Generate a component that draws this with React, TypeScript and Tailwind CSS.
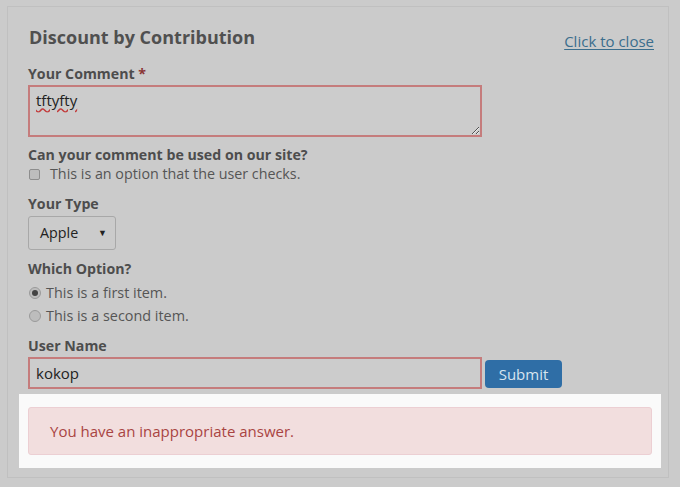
import { useState } from "react";

export default function App() {
    const [comment, setComment] = useState("tftyfty");
    const [name, setName] = useState("kokop");

    return (
        <div className="min-h-[487px] w-[680px] bg-[#cbcbcb] pt-[6px] pl-[7px] text-[14px] text-[#4d4d4d]" style={{ fontFamily: '"Open Sans", sans-serif' }}>
            <div className="w-[662px] h-[472px] border border-[#c0c0c0] bg-[#cbcbcb]">
                {/* Header */}
                <div className="flex justify-between items-start pl-[21px] pr-[14px] pt-[18px]">
                    <h2 className="text-[18px] font-bold leading-[24px] text-[#505050]">Discount by Contribution</h2>
                    <a href="#" className="mt-[6px] text-[15px] leading-[20px] text-[#3b6e8d] underline underline-offset-2">Click to close</a>
                </div>

                <form className="pl-[20px] pt-[13px]">
                    {/* Comment */}
                    <label className="block font-bold leading-[20px] text-[14.2px]">
                        Your Comment <span className="text-[#8a3535]">*</span>
                    </label>
                    <textarea
                        value={comment}
                        onChange={(e) => setComment(e.target.value)}
                        className="block w-[454px] h-[52px] mt-[1px] px-[6px] py-[2px] border-2 border-[#c57c7c] bg-[#cccccc] text-[15px] text-[#222] underline decoration-wavy decoration-[#c23b3b] outline-none resize"
                    />

                    {/* Checkbox */}
                    <div className="mt-[8px] font-bold leading-[20px] text-[14.2px]">Can your comment be used on our site?</div>
                    <label className="flex items-center gap-[10px] leading-[18px] text-[#555] text-[14.3px]">
                        <span className="ml-[1px] w-[11px] h-[11px] rounded-[2px] border border-[#8d8d8d] bg-[#bdbdbd]" />
                        This is an option that the user checks.
                    </label>

                    {/* Select */}
                    <div className="mt-[11px] font-bold leading-[20px] text-[14.2px]">Your Type</div>
                    <div className="mt-[2px] w-[88px] h-[34px] rounded-[3px] border border-[#a8a8a8] flex items-center justify-between pl-[11px] pr-[8px] text-[#222] text-[14.3px]">
                        <span>Apple</span>
                        <span className="text-[9px]">▼</span>
                    </div>

                    {/* Radios */}
                    <div className="mt-[9px] font-bold leading-[20px] text-[14.2px]">Which Option?</div>
                    <label className="flex items-center gap-[5px] mt-[4px] leading-[20px] text-[#555] text-[14.4px]">
                        <span className="ml-[1px] w-[12px] h-[12px] rounded-full border border-[#9a9a9a] bg-[#bdbdbd] flex items-center justify-center">
                            <span className="w-[6px] h-[6px] rounded-full bg-[#444]" />
                        </span>
                        This is a first item.
                    </label>
                    <label className="flex items-center gap-[5px] mt-[3px] leading-[20px] text-[#555] text-[14.4px]">
                        <span className="ml-[1px] w-[12px] h-[12px] rounded-full border border-[#9a9a9a] bg-[#bdbdbd]" />
                        This is a second item.
                    </label>

                    {/* Name */}
                    <div className="mt-[10px] font-bold leading-[20px] text-[14.2px]">User Name</div>
                    <div className="flex items-end gap-[3px] mt-[1px]">
                        <input
                            value={name}
                            onChange={(e) => setName(e.target.value)}
                            className="w-[454px] h-[32px] px-[6px] border-2 border-[#c57c7c] bg-[#cccccc] text-[15px] text-[#222] outline-none"
                        />
                        <button type="button" className="mb-[1px] w-[77px] h-[28px] rounded-[4px] bg-[#2f6ea6] text-[15px] text-[#d8e4ef]">
                            Submit
                        </button>
                    </div>
                </form>

                {/* Alert panel */}
                <div className="mt-[5px] ml-[11px] w-[642px] h-[74px] bg-[#fafafa] pt-[13px] pl-[9px]">
                    <div className="w-[624px] h-[48px] rounded-[3px] border border-[#eccfd3] bg-[#f2dede] flex items-center pl-[21px] text-[15px] text-[#a94442]">
                        You have an inappropriate answer.
                    </div>
                </div>
            </div>
        </div>
    );
}
